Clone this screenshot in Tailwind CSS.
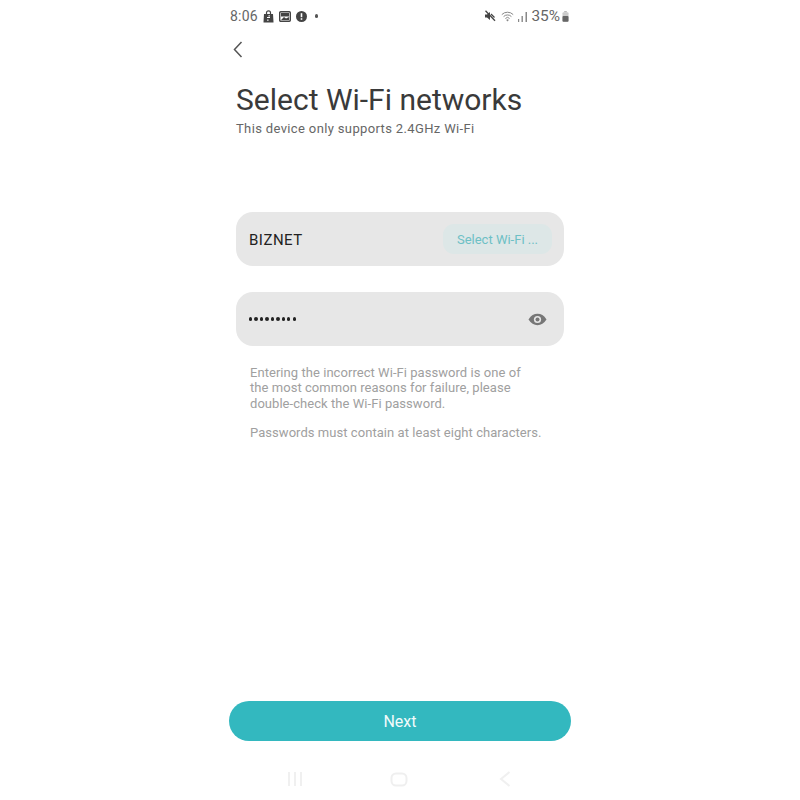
<!doctype html>
<html><head><meta charset="utf-8"><script src="https://cdn.jsdelivr.net/npm/@tailwindcss/browser@4"></script></head>
<body class="bg-white">
<div class="w-[800px] h-[800px] overflow-hidden flex justify-center font-['Roboto',sans-serif]">
<div class="w-[342px] h-[800px] flex flex-col">
  <div class="h-[16px] mt-[8px] flex items-center justify-between text-[#666]">
    <div class="flex items-center">
      <span class="text-[14px] leading-[16px] ml-[1px] tracking-[0.2px]">8:06</span>
      <svg class="ml-[5px]" width="11" height="13" viewBox="0 0 11 13"><path d="M3.500 4V2.800a2 2 0 0 1 4 0V4" fill="none" stroke="#444" stroke-width="1.200"/><path d="M1 4h9l.5 8.500H.5z" fill="#444"/><rect x="5.500" y="5.200" width="1.300" height="1.300" fill="#fff"/><rect x="4" y="7" width="3" height="1" fill="#fff"/><rect x="4.200" y="9.500" width="1.300" height="1.300" fill="#fff"/></svg>
      <svg class="ml-[5px]" width="12" height="11" viewBox="0 0 12 11"><rect x=".7" y=".7" width="10.600" height="9.600" rx="1" fill="#fff" stroke="#444" stroke-width="1.400"/><rect x="2" y="2" width="8" height="3.500" fill="#444"/><path d="M2 9l3-3 2 1.500 3-1.500v3z" fill="#444"/></svg>
      <svg class="ml-[5px]" width="11" height="11" viewBox="0 0 11 11"><circle cx="5.500" cy="5.500" r="5.500" fill="#444"/><rect x="4.700" y="2.200" width="1.600" height="4" fill="#fff"/><rect x="4.700" y="7.200" width="1.600" height="1.600" fill="#fff"/></svg>
      <span class="ml-[8px] w-[3.500px] h-[3.500px] rounded-full bg-[#555]"></span>
    </div>
    <div class="flex items-center mr-[2px]">
      <svg width="12" height="12" viewBox="0 0 12 12"><path d="M1 4.500h2L6 2v8L3 7.500H1z" fill="#444"/><path d="M7 4l3.500 3.500" stroke="#444" stroke-width="1.200"/><path d="M1.500 .8l9.500 10" stroke="#444" stroke-width="1.300"/></svg>
      <svg class="ml-[5px]" width="13" height="11" viewBox="0 0 13 11"><path d="M.8 3.600a8 8 0 0 1 11.400 0M2.600 5.600a5.400 5.400 0 0 1 7.800 0M4.400 7.500a2.800 2.800 0 0 1 4.200 0" fill="none" stroke="#888" stroke-width="1"/><path d="M6.500 10.500L5.200 8.900a2 2 0 0 1 2.600 0z" fill="#888"/></svg>
      <svg class="ml-[4px]" width="10" height="11" viewBox="0 0 10 11"><rect x="0" y="8" width="1.200" height="3" fill="#888"/><rect x="3.500" y="5" width="1.400" height="6" fill="#888"/><rect x="7.500" y="1" width="1.500" height="10" fill="#888"/></svg>
      <span class="text-[15.400px] leading-[16px] ml-[3px]">35%</span>
      <svg class="ml-[2px]" width="7" height="11" viewBox="0 0 7 11"><rect x="2.200" y="0" width="2.600" height="1.500" fill="#bbb"/><rect x=".5" y="1.300" width="6" height="9.400" rx="1" fill="#ccc"/><rect x=".5" y="5" width="6" height="5.700" rx="1" fill="#666"/></svg>
    </div>
  </div>
  <div class="ml-[4px] mt-[16px] h-[18px] flex items-center">
    <svg width="10" height="17" viewBox="0 0 10 17"><path d="M8.500 1L1.500 8.500 8.500 16" fill="none" stroke="#555" stroke-width="1.500"/></svg>
  </div>
  <h1 class="ml-[7px] mt-[24px] text-[30px] leading-[36px] text-[#3a3a3a]">Select Wi-Fi networks</h1>
  <p class="ml-[7px] mt-[2px] text-[13px] leading-[18px] text-[#666] tracking-[0.36px]">This device only supports 2.4GHz Wi-Fi</p>
  <div class="mx-[7px] mt-[74px] h-[54px] rounded-[17px] bg-[#e7e7e7] flex items-center justify-between pl-[13px] pr-[12px]">
    <span class="text-[15px] text-[#222] tracking-[0.5px] relative top-[1px]">BIZNET</span>
    <span class="w-[109px] h-[30px] pt-[1px] rounded-[11px] bg-[#dde7e7] flex items-center justify-center text-[13px] text-[#6dc0c5]">Select Wi-Fi ...</span>
  </div>
  <div class="mx-[7px] mt-[26px] h-[54px] rounded-[17px] bg-[#e7e7e7] flex items-center justify-between pl-[13px] pr-[17px]">
    <span class="flex gap-[2.400px]">
      <i class="w-[3.100px] h-[3.100px] rounded-full bg-[#222]"></i><i class="w-[3.100px] h-[3.100px] rounded-full bg-[#222]"></i><i class="w-[3.100px] h-[3.100px] rounded-full bg-[#222]"></i><i class="w-[3.100px] h-[3.100px] rounded-full bg-[#222]"></i><i class="w-[3.100px] h-[3.100px] rounded-full bg-[#222]"></i><i class="w-[3.100px] h-[3.100px] rounded-full bg-[#222]"></i><i class="w-[3.100px] h-[3.100px] rounded-full bg-[#222]"></i><i class="w-[3.100px] h-[3.100px] rounded-full bg-[#222]"></i><i class="w-[3.100px] h-[3.100px] rounded-full bg-[#222]"></i>
    </span>
    <svg width="19" height="13" viewBox="0 0 19 13"><path d="M.5 6.500C3 2.500 6 .8 9.500.8s6.500 1.700 9 5.700c-2.500 4-5.500 5.700-9 5.700S3 10.500.5 6.500z" fill="#777"/><circle cx="9.500" cy="6.500" r="3.600" fill="#e7e7e7"/><circle cx="9.500" cy="6.500" r="2" fill="#777"/></svg>
  </div>
  <div class="ml-[21px] mt-[19px] text-[13px] leading-[15.300px] text-[#a0a0a0] tracking-[0.05px]">
    <p>Entering the incorrect Wi-Fi password is one of<br>the most common reasons for failure, please<br>double-check the Wi-Fi password.</p>
    <p class="mt-[14px]">Passwords must contain at least eight characters.</p>
  </div>
  <div class="flex-1"></div>
  <button class="h-[40px] pt-[1px] rounded-full bg-[#33b8bf] text-[#f2fbfb] text-[16px] flex items-center justify-center">Next</button>
  <div class="h-[12px] mt-[32px] mb-[15px] flex items-center justify-between pl-[58px] pr-[60px]">
    <svg width="16" height="16" viewBox="0 0 16 16"><path d="M2 1v14M8 1v14M14 1v14" stroke="#f0f0f0" stroke-width="2"/></svg>
    <svg class="mr-[4px]" width="18" height="15" viewBox="0 0 18 15"><rect x="1.500" y="1.500" width="15" height="12" rx="4.500" fill="none" stroke="#efefef" stroke-width="2"/></svg>
    <svg width="12" height="16" viewBox="0 0 12 16"><path d="M10.500 1L2 8l8.500 7" fill="none" stroke="#f0f0f0" stroke-width="2"/></svg>
  </div>
</div>
</div>
</body></html>
